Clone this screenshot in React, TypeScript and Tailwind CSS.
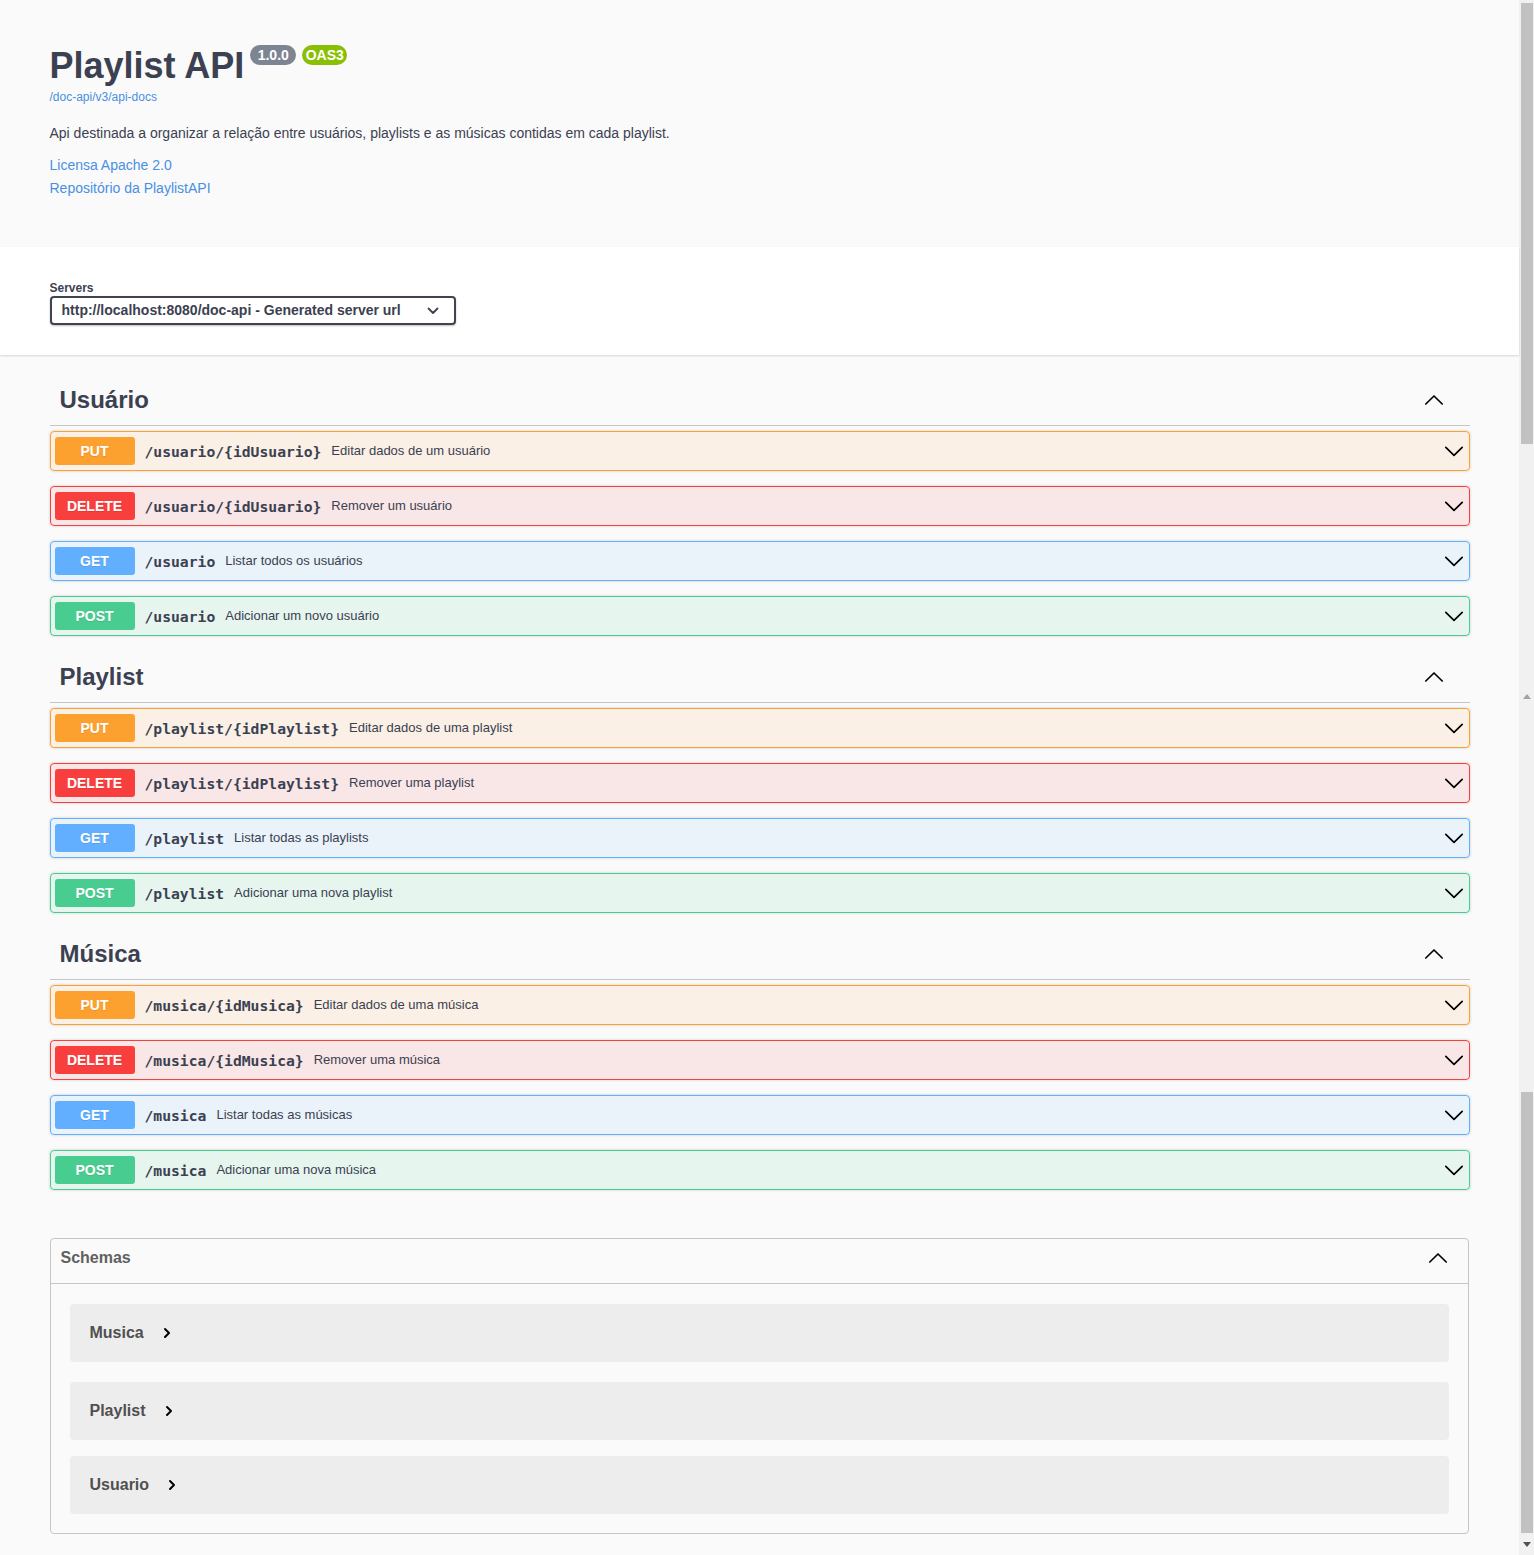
import React from "react";

type Method = "PUT" | "DELETE" | "GET" | "POST";

const styles: Record<Method, { row: string; badge: string }> = {
  PUT: {
    row: "border-[#fca130] bg-[rgba(252,161,48,0.1)]",
    badge: "bg-[#fca130]",
  },
  DELETE: {
    row: "border-[#f93e3e] bg-[rgba(249,62,62,0.1)]",
    badge: "bg-[#f93e3e]",
  },
  GET: {
    row: "border-[#61affe] bg-[rgba(97,175,254,0.1)]",
    badge: "bg-[#61affe]",
  },
  POST: {
    row: "border-[#49cc90] bg-[rgba(73,204,144,0.1)]",
    badge: "bg-[#49cc90]",
  },
};

function ChevronDown() {
  return (
    <svg width="20" height="20" viewBox="0 0 20 20" className="shrink-0 text-black">
      <path d="M1.8 6.4 L10 14.4 L18.2 6.4" fill="none" stroke="currentColor" strokeWidth="1.7" strokeLinecap="round" strokeLinejoin="round" />
    </svg>
  );
}

function ChevronUp() {
  return (
    <svg width="20" height="20" viewBox="0 0 20 20" className="shrink-0 text-black">
      <path d="M1.8 14 L10 6 L18.2 14" fill="none" stroke="currentColor" strokeWidth="1.7" strokeLinecap="round" strokeLinejoin="round" />
    </svg>
  );
}

function ChevronRight() {
  return (
    <svg width="10" height="12" viewBox="0 0 10 12" className="shrink-0 text-black">
      <path d="M3 2 L7 6 L3 10" fill="none" stroke="currentColor" strokeWidth="2" strokeLinecap="round" strokeLinejoin="round" />
    </svg>
  );
}

function SelectChevron() {
  return (
    <svg width="12" height="8" viewBox="0 0 12 8" className="shrink-0 text-[#3b4151]">
      <path d="M1.5 1.5 L6 6 L10.5 1.5" fill="none" stroke="currentColor" strokeWidth="1.8" strokeLinecap="round" strokeLinejoin="round" />
    </svg>
  );
}

type Op = { method: Method; path: string; desc: string };

function OpRow({ op }: { op: Op }) {
  const s = styles[op.method];
  return (
    <div
      className={`mb-[15px] flex h-[40px] items-center rounded-[4px] border pl-[4px] pr-[5px] shadow-[0_0_3px_rgba(0,0,0,0.19)] ${s.row}`}
    >
      <span
        className={`flex h-[28px] w-[80px] shrink-0 items-center justify-center rounded-[3px] text-[14px] font-bold text-white [text-shadow:0_1px_0_rgba(0,0,0,0.1)] ${s.badge}`}
      >
        {op.method}
      </span>
      <span className="px-[10px] pt-[2px] font-['DejaVu_Sans_Mono',monospace] text-[14.7px] font-bold text-[#3b4151]">
        {op.path}
      </span>
      <span className="flex-1 text-[13px] text-[#3b4151]">{op.desc}</span>
      <ChevronDown />
    </div>
  );
}

function TagSection({ title, ops }: { title: string; ops: Op[] }) {
  return (
    <div className="pb-[1px]">
      <div className="mb-[5px] flex h-[51px] items-center border-b border-[#c4c6cb] pl-[10px] pr-[26px]">
        <h3 className="flex-1 text-[24px] font-bold text-[#3b4151]">{title}</h3>
        <ChevronUp />
      </div>
      {ops.map((op, i) => (
        <OpRow key={i} op={op} />
      ))}
    </div>
  );
}

const sections: { title: string; ops: Op[] }[] = [
  {
    title: "Usuário",
    ops: [
      { method: "PUT", path: "/usuario/{idUsuario}", desc: "Editar dados de um usuário" },
      { method: "DELETE", path: "/usuario/{idUsuario}", desc: "Remover um usuário" },
      { method: "GET", path: "/usuario", desc: "Listar todos os usuários" },
      { method: "POST", path: "/usuario", desc: "Adicionar um novo usuário" },
    ],
  },
  {
    title: "Playlist",
    ops: [
      { method: "PUT", path: "/playlist/{idPlaylist}", desc: "Editar dados de uma playlist" },
      { method: "DELETE", path: "/playlist/{idPlaylist}", desc: "Remover uma playlist" },
      { method: "GET", path: "/playlist", desc: "Listar todas as playlists" },
      { method: "POST", path: "/playlist", desc: "Adicionar uma nova playlist" },
    ],
  },
  {
    title: "Música",
    ops: [
      { method: "PUT", path: "/musica/{idMusica}", desc: "Editar dados de uma música" },
      { method: "DELETE", path: "/musica/{idMusica}", desc: "Remover uma música" },
      { method: "GET", path: "/musica", desc: "Listar todas as músicas" },
      { method: "POST", path: "/musica", desc: "Adicionar uma nova música" },
    ],
  },
];

function SchemaItem({ name, mt }: { name: string; mt: string }) {
  return (
    <div className={`flex h-[58px] items-center rounded-[4px] bg-[rgba(0,0,0,0.05)] pl-[20px] ${mt}`}>
      <span className="text-[16px] font-bold text-[#505050]">{name}</span>
      <span className="ml-[18px] flex items-center">
        <ChevronRight />
      </span>
    </div>
  );
}

export default function App() {
  return (
    <div className="flex h-[1555px] w-[1534px] overflow-hidden font-['Liberation_Sans',Arial,sans-serif] text-[#3b4151]">
      <div className="flex-1 bg-[#fafafa]">
        {/* Info */}
        <div className="h-[247px]">
          <div className="mx-auto max-w-[1460px] px-5">
            <div className="flex items-start pt-[45px]">
              <h2 className="mt-[3px] text-[36px] font-bold leading-[36px] text-[#3b4151]">Playlist API</h2>
              <span className="ml-[6px] h-[20px] w-[46px] rounded-full bg-[#7d8492] text-center text-[14px] font-bold leading-[20px] text-white">
                1.0.0
              </span>
              <span className="ml-[6px] h-[20px] w-[45px] rounded-full bg-[#89bf04] text-center text-[14px] font-bold leading-[20px] text-white">
                OAS3
              </span>
            </div>
            <a className="mt-[5px] block text-[12px] leading-[16px] text-[#4990e2]">/doc-api/v3/api-docs</a>
            <p className="mt-[18px] text-[14px] leading-[20px] text-[#3b4151]">
              Api destinada a organizar a relação entre usuários, playlists e as músicas contidas em cada playlist.
            </p>
            <a className="mt-[12px] block text-[14px] leading-[20px] text-[#4990e2]">Licensa Apache 2.0</a>
            <a className="mt-[3px] block text-[14px] leading-[20px] text-[#4990e2]">Repositório da PlaylistAPI</a>
          </div>
        </div>

        {/* Servers */}
        <div className="relative h-[108px] bg-white shadow-[0_1px_2px_0_rgba(0,0,0,0.15)]">
          <div className="mx-auto max-w-[1460px] px-5">
            <div className="pt-[34px] text-[12px] font-bold leading-[14px] text-[#3b4151]">Servers</div>
            <div className="mt-[1px] flex h-[29px] w-[406px] items-center justify-between rounded-[4px] border-2 border-[#41444e] bg-white pl-[10px] pr-[15px] shadow-[0_1px_2px_0_rgba(0,0,0,0.25)]">
              <span className="text-[14px] font-bold text-[#3b4151]">
                http://localhost:8080/doc-api - Generated server url
              </span>
              <SelectChevron />
            </div>
          </div>
        </div>

        {/* Operations */}
        <div className="mx-auto max-w-[1460px] px-5 pt-[20px]">
          {sections.map((s) => (
            <TagSection key={s.title} title={s.title} ops={s.ops} />
          ))}

          {/* Schemas */}
          <div className="mr-[1px] mt-[32px] h-[296px] rounded-[4px] border border-[#c4c6cb]">
            <div className="flex h-[45px] items-start border-b border-[#c4c6cb] pl-[10px] pr-[20px] pt-[9px]">
              <h4 className="flex-1 text-[16px] font-bold leading-[19px] text-[#606060]">Schemas</h4>
              <ChevronUp />
            </div>
            <div className="px-[19px]">
              <SchemaItem name="Musica" mt="mt-[20px]" />
              <SchemaItem name="Playlist" mt="mt-[20px]" />
              <SchemaItem name="Usuario" mt="mt-[16px]" />
            </div>
          </div>
        </div>
      </div>

      {/* Scrollbar */}
      <div className="flex w-[15px] flex-col bg-[#f1f1f1]">
        <div className="ml-[2px] mr-[1px] mt-[3px] h-[441px] bg-[#c1c1c1]" />
        <div className="mt-[250px] flex justify-center">
          <svg width="8" height="5" viewBox="0 0 8 5">
            <path d="M0 5 L4 0 L8 5 Z" fill="#a3a3a3" />
          </svg>
        </div>
        <div className="ml-[2px] mr-[1px] mt-[393px] h-[441px] bg-[#c1c1c1]" />
        <div className="mt-[9px] flex justify-center">
          <svg width="8" height="5" viewBox="0 0 8 5">
            <path d="M0 0 L8 0 L4 5 Z" fill="#505050" />
          </svg>
        </div>
      </div>
    </div>
  );
}
